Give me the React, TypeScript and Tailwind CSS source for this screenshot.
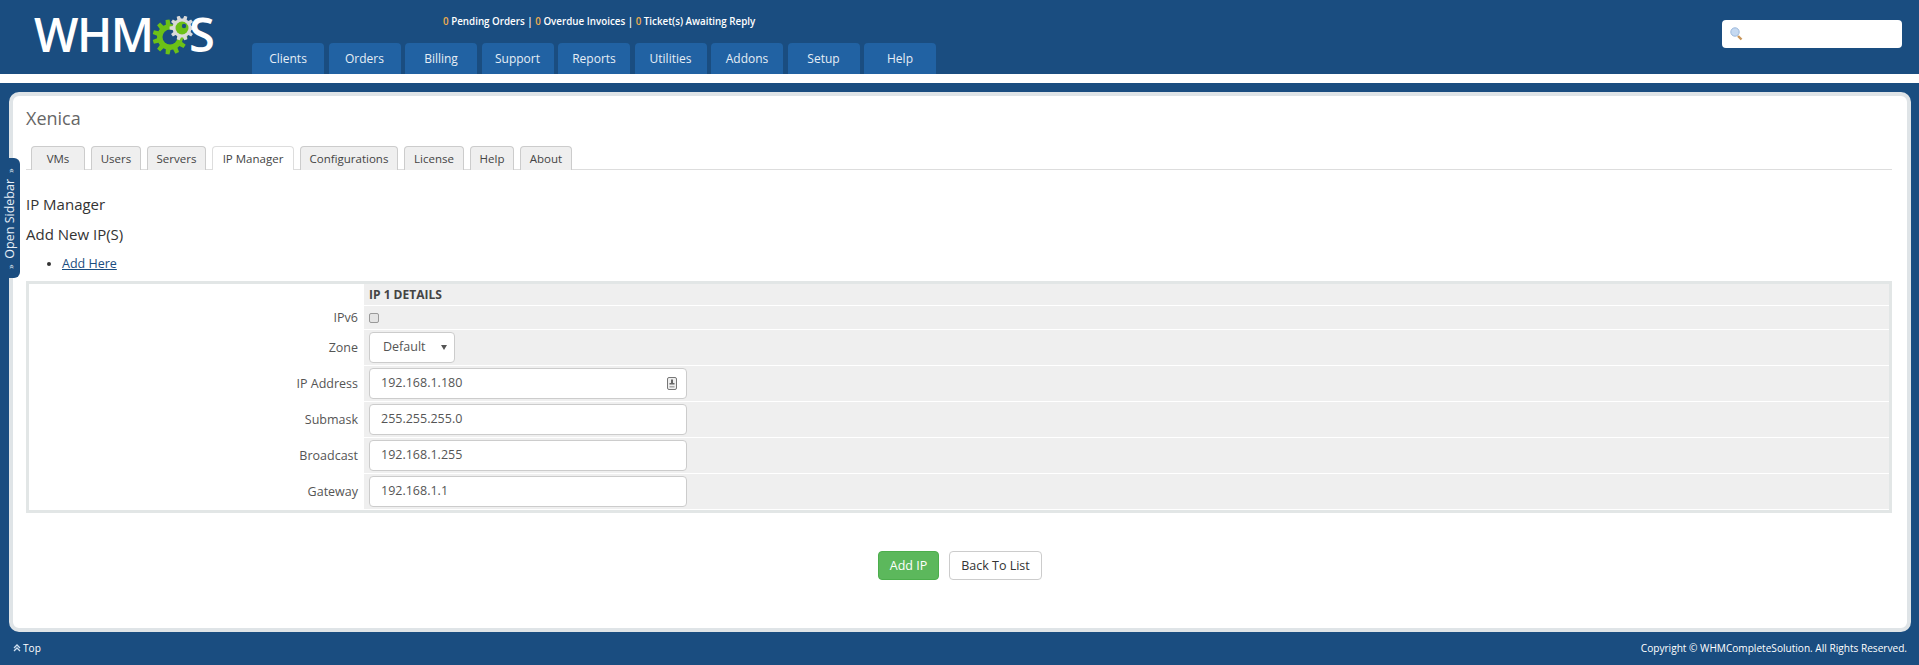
const font = { fontFamily: '"Open Sans", sans-serif' };

const navItems = ['Clients', 'Orders', 'Billing', 'Support', 'Reports', 'Utilities', 'Addons', 'Setup', 'Help'];

const tabs = [
  { label: 'VMs', width: 'w-[54px]' },
  { label: 'Users', width: 'w-[50px]' },
  { label: 'Servers', width: 'w-[59px]' },
  { label: 'IP Manager', width: 'w-[82px]', active: true },
  { label: 'Configurations', width: 'w-[98px]' },
  { label: 'License', width: 'w-[60px]' },
  { label: 'Help', width: 'w-[44px]' },
  { label: 'About', width: 'w-[52px]' },
];

// builds a gear outline from tooth count and radii
function gearPath(cx: number, cy: number, outer: number, inner: number, teeth: number) {
  const pts: string[] = [];
  const step = (Math.PI * 2) / teeth;
  for (let i = 0; i < teeth; i++) {
    const a = i * step;
    const list: [number, number][] = [
      [inner, a - step * 0.32],
      [outer, a - step * 0.2],
      [outer, a + step * 0.2],
      [inner, a + step * 0.32],
    ];
    list.forEach(([r, t]) => pts.push(`${(cx + r * Math.cos(t)).toFixed(2)} ${(cy + r * Math.sin(t)).toFixed(2)}`));
  }
  return `M${pts.join('L')}Z`;
}

const Logo = () => (
  <div className="relative w-[180px] h-[40px]">
    <span className="absolute left-0 top-[-18px] text-[47px] leading-[64px] font-semibold tracking-[-1.5px] text-white">WHM</span>
    <svg className="absolute left-[118px] top-[-4px]" width="50" height="44" viewBox="0 0 50 44">
      <path d={gearPath(18, 21, 17.5, 13, 11)} fill="#6cc117" />
      <circle cx="18" cy="21" r="7.5" fill="#1a4d80" />
      <path d={gearPath(30, 12, 12.5, 9.5, 10)} fill="#d9d9d9" />
      <circle cx="30" cy="12" r="6.5" fill="#6cc117" />
      <circle cx="32" cy="10" r="2.2" fill="#1a4d80" />
    </svg>
    <span className="absolute left-[155px] top-[-18px] text-[47px] leading-[64px] font-semibold text-white">S</span>
  </div>
);

const Row = ({ label, h, children }: { label: string; h: string; children: React.ReactNode }) => (
  <div className={`flex ${h}`}>
    <div className="w-[335px] shrink-0 bg-white flex items-center justify-end pr-[6px] text-[12.5px] text-[#555]">{label}</div>
    <div className="flex-1 bg-[#efefef] border-b border-white flex items-center pl-[5px]">{children}</div>
  </div>
);

const Field = ({ value, icon }: { value: string; icon?: boolean }) => (
  <div className="relative w-[318px] h-[31px] bg-white border border-[#ccc] rounded-[4px] flex items-center pl-[11px] text-[12.5px] text-[#555]">
    {value}
    {icon && (
      <svg className="absolute right-[9px] top-[8px]" width="10" height="13" viewBox="0 0 10 13">
        <rect x="0.5" y="0.5" width="9" height="12" rx="1.5" fill="#eee" stroke="#777" />
        <rect x="4" y="2.5" width="2" height="3.5" fill="#666" />
        <rect x="2.5" y="6" width="5" height="1.5" fill="#666" />
        <rect x="2.5" y="9" width="5" height="1.5" fill="#aaa" />
      </svg>
    )}
  </div>
);

export default function App() {
  return (
    <div className="w-full h-[665px] bg-[#1a4d80] overflow-hidden relative" style={font}>
      <header className="h-[74px] flex">
        <div className="pl-[34px] pt-[20px] w-[252px] shrink-0">
          <Logo />
        </div>
        <div className="flex-1 flex flex-col">
          <div className="h-[43px] pl-[191px] pt-[14px] text-[9.8px] leading-[16px] font-semibold text-white">
            <span className="text-[#f0ad4e]">0</span> Pending Orders | <span className="text-[#f0ad4e]">0</span> Overdue Invoices | <span className="text-[#f0ad4e]">0</span> Ticket(s) Awaiting Reply
          </div>
          <nav className="flex gap-[4.5px]">
            {navItems.map((item) => (
              <a key={item} className="w-[72px] h-[31px] bg-[#2162a3] rounded-t-[4px] flex items-center justify-center text-[12px] text-[#e6eef6]">
                {item}
              </a>
            ))}
          </nav>
        </div>
        <div className="pt-[20px] pr-[17px]">
          <div className="w-[180px] h-[28px] bg-white rounded-[4px] flex items-center pl-[8px]">
            <svg width="13" height="14" viewBox="0 0 13 14">
              <line x1="8" y1="9" x2="11.5" y2="12.5" stroke="#c9965a" strokeWidth="2.4" />
              <circle cx="5" cy="5" r="4.2" fill="#c5d9f1" stroke="#9db9dc" />
            </svg>
          </div>
        </div>
      </header>

      <div className="h-[9px] bg-white" />

      <main className="h-[540px] mt-[9px] ml-[9px] mr-[8px] bg-white border-[4px] border-[#dfe4e7] rounded-[10px] pl-[13px] pr-[13px]">
        <h1 className="text-[18px] leading-[24px] text-[#666] mt-[10px]">Xenica</h1>
        <div className="flex gap-[6px] mt-[16px] pl-[5px] border-b border-[#ddd] h-[24px] mr-[2px]">
          {tabs.map((tab) => (
            <div
              key={tab.label}
              className={`${tab.width} h-[24px] pt-[1px] flex items-center justify-center rounded-t-[4px] border border-b-0 text-[11.5px] text-[#444] ${
                tab.active ? 'bg-white border-[#ddd] relative' : 'bg-[#efefef] border-[#ccc]'
              }`}
            >
              {tab.label}
            </div>
          ))}
        </div>

        <h2 className="text-[15px] leading-[20px] text-[#333] mt-[24px]">IP Manager</h2>
        <h2 className="text-[15px] leading-[20px] text-[#333] mt-[10px]">Add New IP(S)</h2>
        <ul className="list-disc pl-[36px] mt-[11px] text-[12.5px] leading-[18px] text-[#333]">
          <li>
            <a className="underline text-[#1a4d80]">Add Here</a>
          </li>
        </ul>

        <div className="mt-[8px] mr-[2px] border-[3px] border-[#e2e6e6]">
          <Row label="" h="h-[22px]">
            <span className="text-[12px] font-bold text-[#444]">IP 1 DETAILS</span>
          </Row>
          <Row label="IPv6" h="h-[24px]">
            <div className="w-[10px] h-[10px] bg-[#e4e4e4] border border-[#999] rounded-[2px]" />
          </Row>
          <Row label="Zone" h="h-[36px]">
            <div className="w-[86px] h-[31px] bg-white border border-[#ccc] rounded-[4px] flex items-center justify-between pl-[13px] pr-[7px] text-[12.5px] text-[#555]">
              Default
              <span className="w-0 h-0 border-l-[3px] border-r-[3px] border-t-[5px] border-l-transparent border-r-transparent border-t-[#555]" />
            </div>
          </Row>
          <Row label="IP Address" h="h-[36px]">
            <Field value="192.168.1.180" icon />
          </Row>
          <Row label="Submask" h="h-[36px]">
            <Field value="255.255.255.0" />
          </Row>
          <Row label="Broadcast" h="h-[36px]">
            <Field value="192.168.1.255" />
          </Row>
          <Row label="Gateway" h="h-[36px]">
            <Field value="192.168.1.1" />
          </Row>
        </div>

        <div className="flex justify-center gap-[10px] mt-[38px]">
          <button className="w-[61px] h-[29px] pt-[1px] bg-[#5cb85c] border border-[#4cae4c] rounded-[4px] text-[12.5px] text-white">Add IP</button>
          <button className="w-[93px] h-[29px] pt-[1px] bg-white border border-[#ccc] rounded-[4px] text-[12.5px] text-[#333]">Back To List</button>
        </div>
      </main>

      <footer className="flex justify-between items-center pl-[13px] pr-[12px] h-[33px] text-[10.1px] text-white font-medium">
        <span className="flex items-center gap-[2px]">
          <svg width="8" height="8" viewBox="0 0 8 8" fill="none" stroke="#cfe0f0" strokeWidth="1.3">
            <path d="M1 4 L4 1 L7 4 M1 7 L4 4 L7 7" />
          </svg>
          Top
        </span>
        <span>Copyright © WHMCompleteSolution. All Rights Reserved.</span>
      </footer>

      <div className="absolute left-0 top-[158px] w-[20px] h-[120px] bg-[#1a4d80] rounded-r-[6px] flex items-center justify-center">
        <span className="[writing-mode:vertical-rl] rotate-180 flex items-center gap-[6px] text-[12.5px] text-[#e6eef6] whitespace-nowrap">
          <span className="text-[9px]">»</span>
          <span>Open Sidebar</span>
          <span className="text-[9px]">»</span>
        </span>
      </div>
    </div>
  );
}
